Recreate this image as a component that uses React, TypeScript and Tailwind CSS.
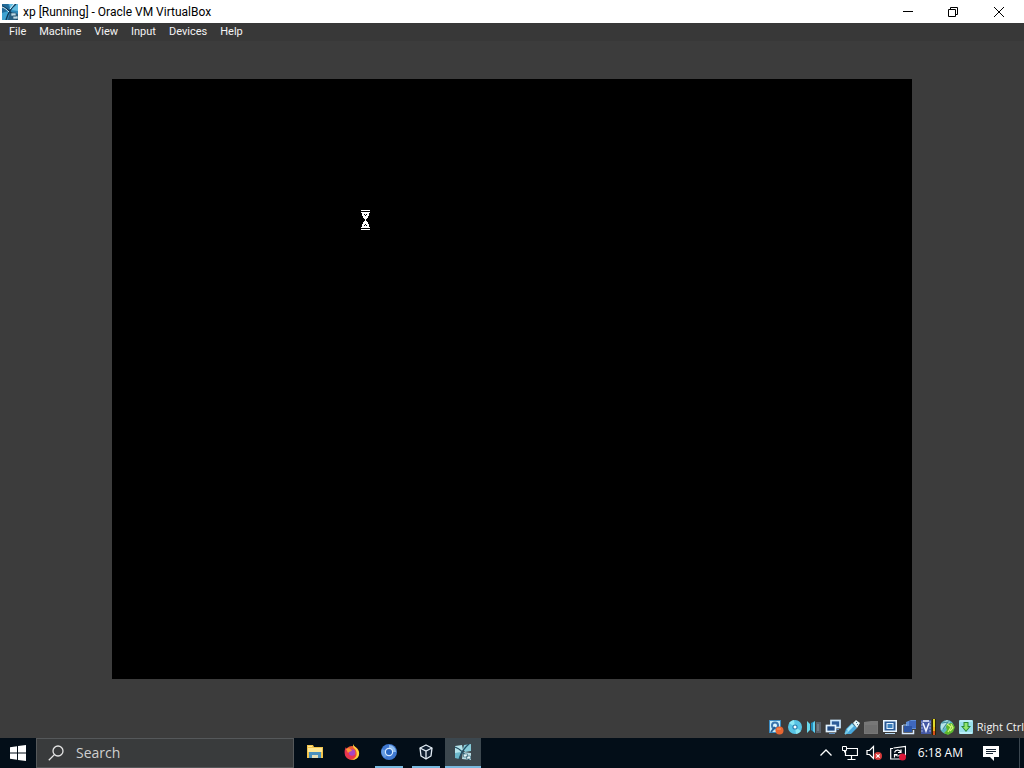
import type { ReactNode } from 'react';

function Svg({ size = 16, className = 'size-4', children }: { size?: number; className?: string; children: ReactNode }) {
  return (
    <svg viewBox={`0 0 ${size} ${size}`} className={`${className} shrink-0`} fill="none" aria-hidden="true">
      {children}
    </svg>
  );
}

function MachineIcon({ className = 'size-4' }: { className?: string }) {
  return (
    <Svg className={className}>
      <rect width="16" height="16" fill="#2e87b8" />
      <path d="M0 0h6l2 6-8 3z" fill="#226b99" />
      <path d="M7 0h9v7L9 6z" fill="#63bce0" />
      <path d="M0 9l8-2-3 9H0z" fill="#3fa3d1" />
      <path d="M8 8l8 2v6H6z" fill="#285f83" />
      <path d="M0 2c6 3 10 7 15 14M14 0C9 4 6 9 4 16" stroke="#103c5c" strokeWidth="1.4" />
      <path d="M0 3c3 1 5 3 7 5M12 0L8 5" stroke="#d7f4ff" strokeWidth="1" />
      <path d="M9 9h5v3H9zM11 12h5v3h-5z" fill="#bfdbe8" stroke="#315d77" strokeWidth=".7" />
    </Svg>
  );
}

function TaskMachineIcon() {
  return (
    <Svg>
      <path d="M0 2l7-1 1 5-3 4-5-1z" fill="#b4e3ea" />
      <path d="M9 1l7-1v7l-6 1-2-3z" fill="#86cbd9" />
      <path d="M0 9l6-1-2 7-4-1z" fill="#6bb6c9" />
      <path d="M8 8l8 1v7l-9-1z" fill="#b9dce4" />
      <path d="M0 3c6 2 10 7 14 13M14 0C9 4 6 9 4 15" stroke="#234f65" strokeWidth="1.3" />
      <path d="M8.500 10h4v3h-4zM11.500 12h4v3h-4z" fill="#e6f5f8" stroke="#416e80" strokeWidth=".7" />
    </Svg>
  );
}

const menus = ['File', 'Machine', 'View', 'Input', 'Devices', 'Help'];

const devices: { label: string; art: ReactNode }[] = [
  {
    label: 'Hard disks',
    art: (
      <>
        <path d="M1 1h12v13H1z" fill="#3b8cc3" />
        <path d="M2 2h10v11H2z" fill="#c7edf8" />
        <circle cx="7" cy="6.5" r="4" fill="#3976ad" />
        <circle cx="7" cy="6.5" r="2" fill="#dff8ff" />
        <path d="M3 13l4-5" stroke="#245c90" strokeWidth="2" />
        <circle cx="11.5" cy="11.5" r="4" fill="#e86631" />
        <path d="M9 10h4" stroke="#ff9a65" />
      </>
    ),
  },
  {
    label: 'Optical drives',
    art: (
      <>
        <circle cx="8" cy="8" r="7" fill="#58c4e6" />
        <path d="M8 8L2 4a7 7 0 015-3zM8 8l6 4a7 7 0 01-5 3z" fill="#8ce8f4" />
        <circle cx="8" cy="8" r="2.600" fill="#267dae" />
        <circle cx="8" cy="8" r="1.5" fill="#fff" />
      </>
    ),
  },
  {
    label: 'Audio',
    art: (
      <>
        <path d="M1 2l3 3v6l-3 3z" fill="#69d9ed" />
        <path d="M5 4l4-2v12l-4-3z" fill="#218bbb" />
        <path d="M7 4l2-2v12l-2-2z" fill="#62cfee" />
        <path d="M10 3h5v11h-5z" fill="#59616b" />
        <path d="M11 5h2v7h-2z" fill="#737b84" />
      </>
    ),
  },
  {
    label: 'Network',
    art: (
      <>
        <rect x="6" y="1.5" width="9" height="7" fill="#2c5c99" stroke="#cde9ff" strokeWidth="1.7" />
        <rect x="1.5" y="6.5" width="9" height="6" fill="#224c85" stroke="#e3f4ff" strokeWidth="1.7" />
        <path d="M4 14.5h6M11 10.5h3" stroke="#5f8fc0" strokeWidth="1" />
      </>
    ),
  },
  {
    label: 'USB',
    art: (
      <>
        <path d="M2 10l6-6 5 5-6 6-4 0-2-2z" fill="#48a7db" />
        <path d="M3 10l5-5 2 2-6 6z" fill="#a7e9fb" />
        <path d="M9 4l3-3 4 3-3 5z" fill="#e5f7fa" />
        <path d="M12 3l1 1M13 5l1 1" stroke="#44708a" />
        <path d="M1 15l3-3" stroke="#76cce8" strokeWidth="2" />
      </>
    ),
  },
  {
    label: 'Shared folders',
    art: (
      <>
        <path d="M1 3l7-1h7v13H1z" fill="#777" />
        <path d="M2 6h12v8H2z" fill="#707070" />
      </>
    ),
  },
  {
    label: 'Display',
    art: (
      <>
        <rect x="1" y="1" width="14" height="12" fill="#eaf6ff" />
        <rect x="2.5" y="2.5" width="11" height="9" fill="#295996" />
        <rect x="5" y="4.5" width="6" height="5" fill="#3c80bd" stroke="#e3f3ff" />
        <path d="M3 14.5h10" stroke="#b8daf5" strokeWidth="1" />
      </>
    ),
  },
  {
    label: 'Recording',
    art: (
      <>
        <path d="M5 3l5-2h5v9H5z" fill="#5f8ed8" />
        <path d="M8 2h7v7H8z" fill="#3f68bd" />
        <path d="M1.5 6v8.5h11V11" stroke="#d8eaff" strokeWidth="1.5" />
        <path d="M3 7h8v6H3z" fill="#2c55a4" />
        <path d="M2 6h4" stroke="#9dc6f5" />
      </>
    ),
  },
  {
    label: 'Processor',
    art: (
      <>
        <rect x="1" y="1" width="10" height="14" fill="#4458a4" />
        <path d="M1 3h2M1 6h2M1 9h2M1 12h2M9 3h2M9 6h2M9 9h2M9 12h2" stroke="#9cabdc" />
        <path d="M3 4l3 8 3-8M3 2h6" stroke="#f1f4ff" strokeWidth="1.5" />
        <path d="M12 0h4v16h-4z" fill="#302400" />
        <path d="M13 0h2v8h-2z" fill="#e0d92a" />
        <path d="M13 8h2v4h-2z" fill="#efb51e" />
        <path d="M13 12h2v4h-2z" fill="#d8501c" />
      </>
    ),
  },
  {
    label: 'Mouse integration',
    art: (
      <>
        <circle cx="8" cy="8" r="7" fill="#5db4c4" />
        <path d="M2 5l6-4 3 2-5 6-4 2z" fill="#b5e3e8" />
        <path d="M3 4l6-1-5 7" stroke="#3e8c9b" strokeWidth="1.2" />
        <path d="M8 5l5-1 3 4-2 5-5 3-4-2 3-3-1-3z" fill="#5cb82c" />
        <path d="M8 5l4 3-3 5M12 5l2 4-3 3" stroke="#d5f77c" strokeWidth="1.2" />
      </>
    ),
  },
  {
    label: 'Keyboard',
    art: (
      <>
        <rect x="1" y="1" width="14" height="14" rx="1" fill="#9adfec" />
        <path d="M2 2h12M2 14h12" stroke="#c3f4fb" strokeWidth="1.5" />
        <path d="M5.500 3h5v4H13l-5 6-5-6h2.500z" fill="#298935" />
        <path d="M6.500 4h3v4H11l-3 3.500L5 8h1.500z" fill="#92e66a" />
      </>
    ),
  },
];

function ExplorerIcon() {
  return (
    <Svg>
      <path d="M0 1h6l1 2h9v11H0z" fill="#f3c54d" />
      <path d="M1 2h4v1H1zM1 4h14v4H1z" fill="#ffe895" />
      <path d="M2 8h12v6h-3v-3H5v3H2z" fill="#4b91bd" />
      <path d="M5 11h6v3H5z" fill="#e4dfb8" />
    </Svg>
  );
}

function FirefoxIcon() {
  return (
    <Svg>
      <circle cx="8" cy="9" r="7" fill="#f05a36" />
      <path d="M9 0c1 3 5 4 6 8 1 5-3 8-7 8 5-2 6-7 3-11C9 4 9 2 9 0z" fill="#ffd53d" />
      <path d="M2 3c0 3 3 1 5 5-3 1 0 5 5 2-1 6-9 7-11 1C0 7 1 5 2 3z" fill="#e9354e" />
      <circle cx="8" cy="8.5" r="3.2" fill="#a846c4" />
      <path d="M2 5c3-2 5 0 6 2-2 0-3 1-4 2z" fill="#ff9637" />
    </Svg>
  );
}

function ChromiumIcon() {
  return (
    <Svg>
      <circle cx="8" cy="8" r="8" fill="#3f78d0" />
      <path d="M8 8V1a7 7 0 017 7H9z" fill="#8ebdf0" />
      <path d="M8 8l-4 6a7 7 0 01-3-9z" fill="#659be1" />
      <circle cx="8" cy="8" r="4.2" fill="#d7eaff" />
      <circle cx="8" cy="8" r="3" fill="#2866c2" />
    </Svg>
  );
}

function BoxIcon() {
  return (
    <Svg>
      <path d="M8 1l6 3-1 8-5 3-5-3-1-8z" fill="#101f30" stroke="#e4edf5" strokeWidth="1.3" strokeLinejoin="round" />
      <path d="M2 4l6 3 6-3M8 7v8" stroke="#e4edf5" strokeWidth="1.3" />
    </Svg>
  );
}

const tasks = [
  { label: 'File Explorer', icon: <ExplorerIcon />, state: '' },
  { label: 'Firefox', icon: <FirefoxIcon />, state: '' },
  { label: 'Chromium', icon: <ChromiumIcon />, state: 'open' },
  { label: 'Oracle VM VirtualBox Manager', icon: <BoxIcon />, state: 'open' },
  { label: 'xp [Running]', icon: <TaskMachineIcon />, state: 'active' },
];

function TitleBar() {
  return (
    <header className="flex h-[23px] items-center bg-white text-black">
      <div className="flex flex-1 items-center gap-[5px] pl-[2px]">
        <MachineIcon />
        <h1 className="font-[Roboto,sans-serif] text-[12px] leading-4">xp [Running] - Oracle VM VirtualBox</h1>
      </div>
      <div className="flex pr-[2px]">
        <button aria-label="Minimize" className="grid h-[22px] w-[46px] place-items-center">
          <Svg size={12} className="size-3"><path d="M2 5.5h10" stroke="#000" /></Svg>
        </button>
        <button aria-label="Restore" className="grid h-[22px] w-[46px] place-items-center">
          <Svg size={12} className="size-3"><path d="M1.5 3.5h7v7h-7zM3.5 3V1.500h7v7H9" stroke="#000" /></Svg>
        </button>
        <button aria-label="Close" className="grid h-[22px] w-[46px] place-items-center">
          <Svg size={12} className="size-3"><path d="M1 1l10 10M11 1L1 11" stroke="#000" /></Svg>
        </button>
      </div>
    </header>
  );
}

function Taskbar() {
  return (
    <footer className="flex h-[30px] items-stretch bg-[#030e18] text-white">
      <button aria-label="Start" className="grid w-9 place-items-center">
        <Svg><path d="M0 2.2l7-1v6.3H0zM8 1l8-1v7.5H8zM0 8.5h7v6.3l-7-1zM8 8.5h8V16l-8-1z" fill="#fff" /></Svg>
      </button>
      <label className="mr-[3px] flex w-[258px] items-center gap-3 border border-[#55585a] bg-[#393b3c] pl-[11px]">
        <Svg>
          <circle cx="10" cy="6" r="5" stroke="#e4e4e4" strokeWidth="1.3" />
          <path d="M6.4 9.6L.8 15.2" stroke="#e4e4e4" strokeWidth="1.3" />
        </Svg>
        <input
          type="text"
          aria-label="Search"
          placeholder="Search"
          className="w-full min-w-0 bg-transparent font-['Open_Sans',sans-serif] text-sm leading-5 outline-none placeholder:text-[#cfcfcf]"
        />
      </label>
      <nav aria-label="Applications" className="flex flex-1 gap-px">
        {tasks.map((t) => (
          <button
            key={t.label}
            aria-label={t.label}
            className={`flex w-9 flex-col items-center ${t.state === 'active' ? 'bg-[#3c474e]' : ''}`}
          >
            <span className="grid flex-1 place-items-center">{t.icon}</span>
            <span className={`h-[2px] ${t.state === 'active' ? 'w-full bg-[#79b9df]' : t.state === 'open' ? 'w-7 bg-[#79b9df]' : 'w-7'}`} />
          </button>
        ))}
      </nav>
      <div className="flex items-center">
        <button aria-label="Show hidden icons" className="grid w-6 place-items-center">
          <Svg><path d="M2.5 10.5L8 5l5.500 5.500" stroke="#fff" strokeWidth="1.3" /></Svg>
        </button>
        <button aria-label="Network" className="grid w-6 place-items-center">
          <Svg>
            <path d="M5 3.500h10.500v7H3.500V6M9.500 10.500v4M5.500 14.500h8" stroke="#fff" strokeWidth="1.200" />
            <path d="M.5 1.500h4v4h-4zM2.500 5.500v2" stroke="#fff" />
          </Svg>
        </button>
        <button aria-label="Volume muted" className="grid w-6 place-items-center">
          <Svg>
            <path d="M1 5.500h2.500l4-4v12l-4-4H1z" stroke="#fff" strokeWidth="1.200" />
            <circle cx="12" cy="11" r="4" fill="#d63a3a" />
            <path d="M10.300 9.300l3.400 3.400M13.700 9.300l-3.400 3.400" stroke="#fff" strokeWidth="1.200" />
          </Svg>
        </button>
        <button aria-label="Windows Update" className="grid w-6 place-items-center">
          <Svg>
            <path d="M12 14H.700V3.500H3M3.500 3l12-1.500v9" stroke="#fff" strokeWidth="1.200" />
            <path d="M4.500 7.500c1-3 5-3 6-.5M11 4.500v3H8M10.500 9.500c-1 2-4 2-5.500 0M4.500 12.500v-3h3" stroke="#fff" strokeWidth="1.200" />
            <circle cx="12.500" cy="12" r="3.500" fill="#dc1738" />
          </Svg>
        </button>
        <time className="pl-2 font-['Open_Sans',sans-serif] text-[12px] leading-4 whitespace-nowrap">6:18 AM</time>
        <button aria-label="Notifications" className="ml-4 grid w-6 place-items-center">
          <Svg>
            <path d="M0 1h16v11h-5v4l-4-4H0z" fill="#fff" />
            <path d="M3 4.500h10M3 6.500h10M3 8.500h7" stroke="#152331" />
          </Svg>
        </button>
      </div>
      <button aria-label="Show desktop" className="ml-4 w-[5px] border-l border-[#3c4750]" />
    </footer>
  );
}

export default function App() {
  return (
    <div className="flex min-h-screen flex-col bg-[#3c3c3c]">
      <TitleBar />
      <nav aria-label="Menu" className="flex h-[18px] items-center gap-[13px] bg-[#383838] pl-[9px] font-[Roboto,sans-serif] text-[11px] leading-4 text-[#f3f3f3]">
        {menus.map((m) => (
          <button key={m}>{m}</button>
        ))}
      </nav>
      <main className="flex flex-1 items-center px-28 py-[38px]">
        <section aria-label="Guest display" className="relative aspect-[4/3] w-full bg-black">
          <svg viewBox="0 0 10 20" className="absolute top-[131px] left-[249px] h-5 w-[10px]" shapeRendering="crispEdges" aria-hidden="true">
            <path d="M0 0h9v1H0zM0 2h9v1H8v3H7v2H6v1H5v2h1v1h1v2h1v3h1v1H0v-1h1v-3h1v-2h1v-1h1V9H3V8H2V6H1V3H0zM0 19h9v1H0z" fill="#fff" />
            <path d="M3 4h1v1H3zM5 4h1v1H5zM4 5h1v1H4zM4 14h1v1H4zM3 15h1v1H3zM5 15h1v1H5z" fill="#000" />
          </svg>
        </section>
      </main>
      <div className="flex h-[21px] items-center justify-end gap-[3px] pb-px">
        {devices.map((d) => (
          <button key={d.label} aria-label={d.label}>
            <Svg>{d.art}</Svg>
          </button>
        ))}
        <span className="font-['Open_Sans',sans-serif] text-[11px] leading-4 whitespace-nowrap text-[#f3f3f3]">Right Ctrl</span>
      </div>
      <Taskbar />
    </div>
  );
}
